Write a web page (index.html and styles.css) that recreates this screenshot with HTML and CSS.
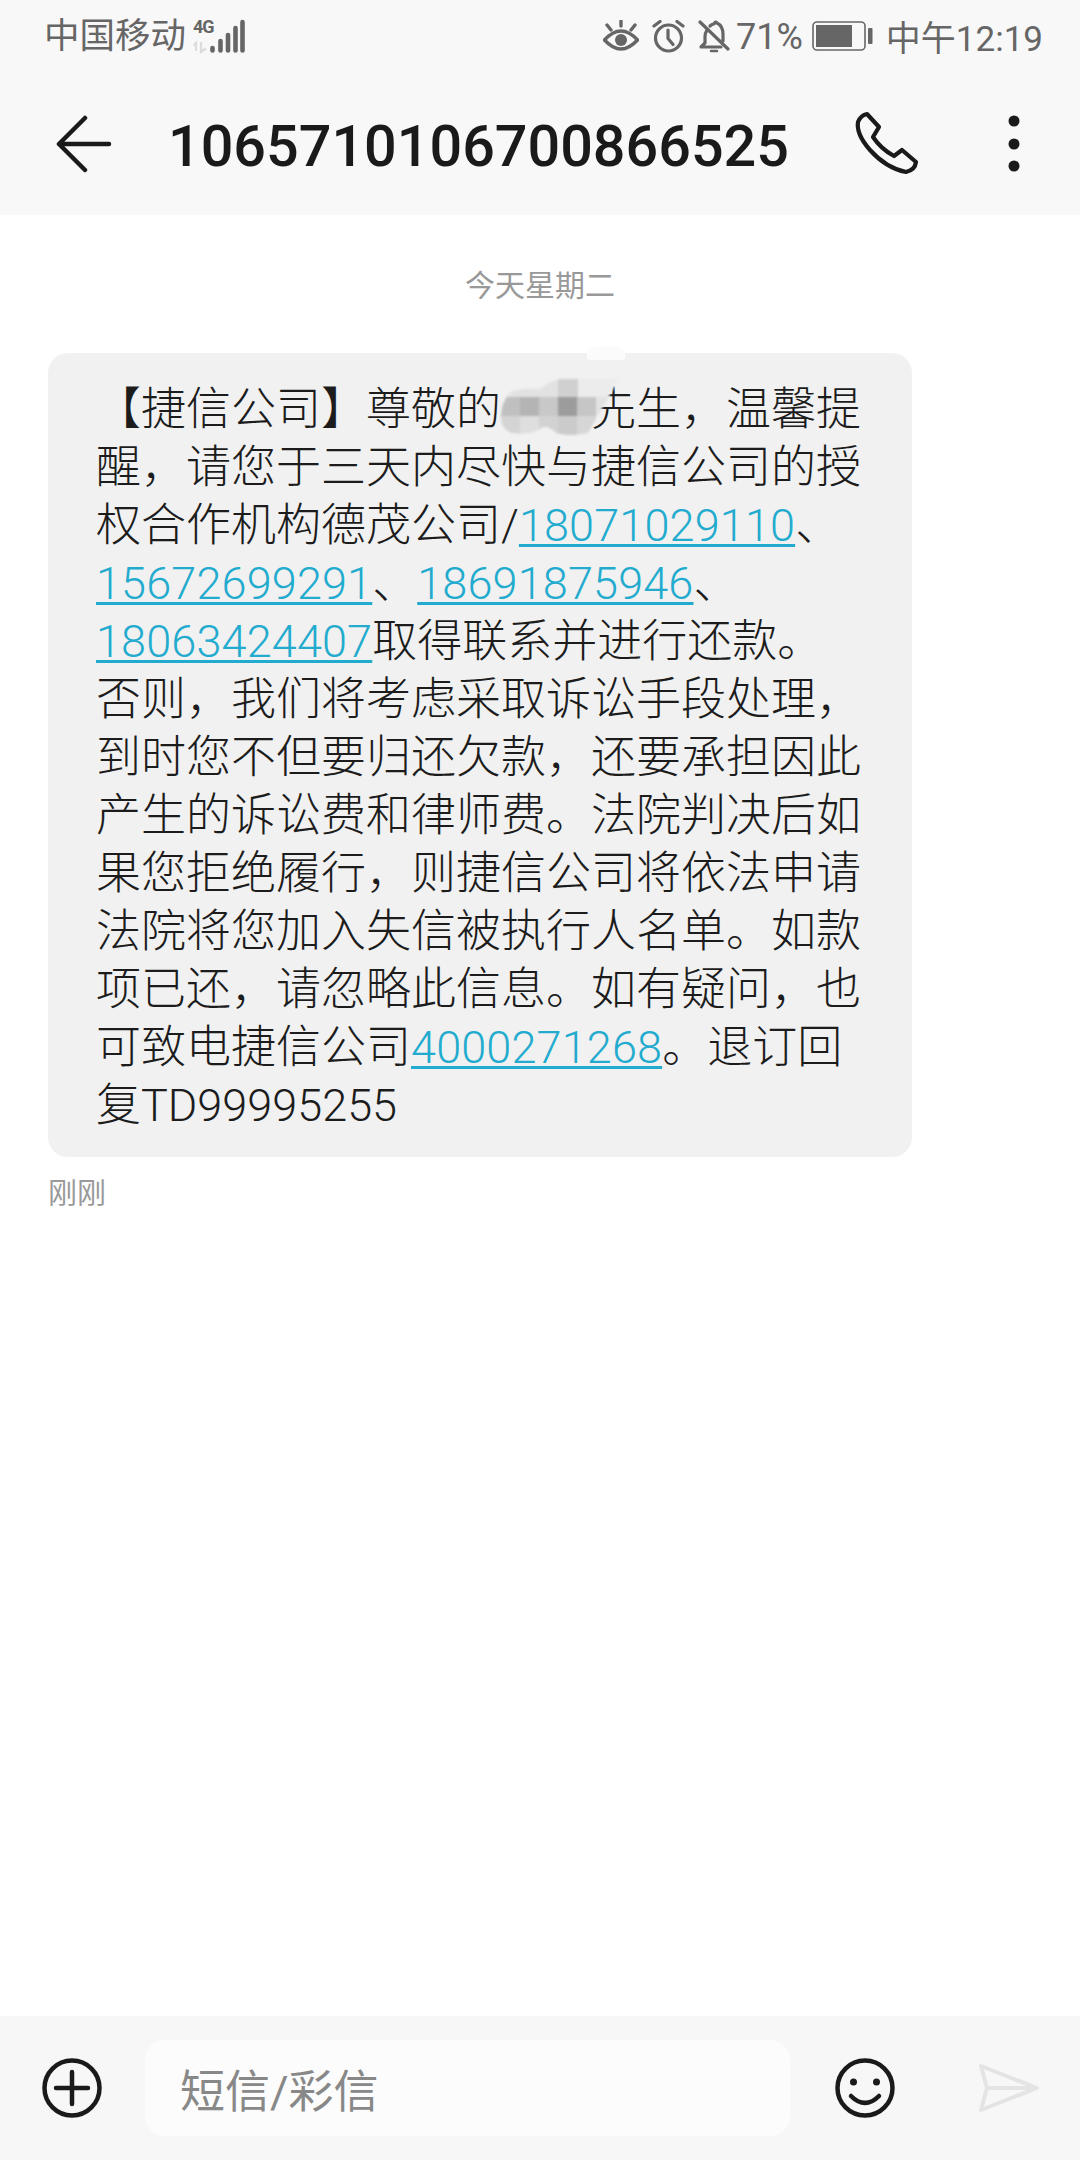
FILE: index.html
```html
<!DOCTYPE html>
<html lang="zh-CN">
<head>
<meta charset="utf-8">
<title>短信</title>
<link rel="stylesheet" href="styles.css">
</head>
<body>
<div class="phone">
  <div class="status">
    <div class="status-left">
      <span class="carrier">中国移动</span>
      <div class="net">
        <span class="net-4g">4G</span>
        <svg class="signal" width="52" height="36" viewBox="0 0 52 36"><g fill="none" stroke="#dcdcdc" stroke-width="2.200"><path d="M3 33v-8l-2.500 2.500"/><path d="M8 24v10l5-3.500"/></g><g fill="none" stroke="#666" stroke-linecap="round" stroke-width="4.600"><path d="M19.500 30v2.500"/><path d="M27.500 23v9.500"/><path d="M35 17v15.500"/><path d="M42.500 10v22.500"/><path d="M49.500 4v28.500"/></g></svg>
      </div>
    </div>
    <div class="status-right">
      <svg class="ic-eye" width="36" height="32" viewBox="0 0 36 32"><g fill="none" stroke="#666" stroke-width="3.400" stroke-linecap="round"><path d="M1.500 19Q18 1 34.500 19Q18 37 1.500 19Z" transform="translate(0 1)"/><path d="M18 1v5M4 5l4 5M32 5l-4 5"/></g><circle cx="18" cy="20" r="6" fill="#666"/></svg>
      <svg class="ic-alarm" width="33" height="33" viewBox="0 0 33 33"><g fill="none" stroke="#666" stroke-width="3.200" stroke-linecap="round"><circle cx="16.500" cy="18" r="13"/><path d="M16 10v8.500l5 6M2 6l6-4.500M31 6l-6-4.500"/></g></svg>
      <svg class="ic-bell" width="32" height="33" viewBox="0 0 32 33"><g fill="none" stroke="#666" stroke-width="3.200" stroke-linecap="round" stroke-linejoin="round"><path d="M2 2l28 27"/><path d="M9 10Q7 13 7 17v6l-4 4h20"/><path d="M12 6Q14 4 16 4Q17 1 19 3Q25 6 25 14v7"/><path d="M13 31h6" stroke-width="2.500"/></g></svg>
      <span class="pct">71%</span>
      <svg class="ic-batt" width="61" height="30" viewBox="0 0 61 30"><rect x="1" y="1" width="52" height="28" rx="4" fill="none" stroke="#666" stroke-width="1.600"/><rect x="4" y="4" width="36" height="22" fill="#666"/><rect x="56" y="7" width="4.500" height="16" rx="1" fill="#666"/></svg>
      <span class="time">中午12:19</span>
    </div>
  </div>

  <header class="topbar">
    <svg class="ic-back" width="56" height="58" viewBox="0 0 56 58"><path d="M29 3L3 29l26 26M3 29h50" fill="none" stroke="#1a1a1a" stroke-width="4.500" stroke-linecap="round" stroke-linejoin="round"/></svg>
    <h1 class="title">1065710106700866525</h1>
    <svg class="ic-phone" width="90" height="90" viewBox="0 0 90 90"><path d="M23 10L35 23L29 33Q37 45 50 52L58 46L72 58Q71 66 62 68Q42 64 26 46Q12 30 14 18Q17 11 23 10Z" fill="none" stroke="#1a1a1a" stroke-width="4.200" stroke-linejoin="round"/></svg>
    <svg class="ic-more" width="12" height="58" viewBox="0 0 12 58"><g fill="#1a1a1a"><circle cx="6" cy="6" r="5.500"/><circle cx="6" cy="29" r="5.500"/><circle cx="6" cy="51" r="5.500"/></g></svg>
  </header>

  <main class="thread">
    <div class="date">今天星期二</div>
    <div class="bubble">
      <span class="smudge"></span>
      <p class="msg">【捷信公司】尊敬的<span class="masked"><svg class="mosaic" width="120" height="56" viewBox="0 0 120 56"><defs><clipPath id="mosaic-clip"><path d="M1 36Q2 22 10 14Q20 8 40 10Q50 2 60 0H119L88 54Q70 58 56 54Q46 44 40 50Q30 56 12 54Q0 50 1 36Z"/></clipPath></defs><g clip-path="url(#mosaic-clip)"><rect width="120" height="18" y="0" fill="#ececec"/><rect x="0" width="60" height="18" fill="#e2e2e2"/><rect x="58" width="20" height="18" fill="#d0d0d0"/><rect y="18" width="20" height="19" fill="#c0c0c0"/><rect x="20" y="18" width="19" height="19" fill="#b4b4b4"/><rect x="39" y="18" width="19" height="19" fill="#c8c8c8"/><rect x="58" y="18" width="19" height="19" fill="#9c9c9c"/><rect x="77" y="18" width="19" height="19" fill="#c6c6c6"/><rect x="96" y="18" width="24" height="19" fill="#e2e2e2"/><rect y="37" width="20" height="19" fill="#d4d4d4"/><rect x="20" y="37" width="19" height="19" fill="#dedede"/><rect x="39" y="37" width="19" height="19" fill="#d2d2d2"/><rect x="58" y="37" width="19" height="19" fill="#cbcbcb"/><rect x="77" y="37" width="19" height="19" fill="#d6d6d6"/><rect x="96" y="37" width="24" height="19" fill="#ececec"/></g></svg></span>先生，温馨提<br>醒，请您于三天内尽快与捷信公司的授<br>权合作机构德茂公司/<a class="num">18071029110</a>、<br><a class="num">15672699291</a>、<a class="num">18691875946</a>、<br><a class="num">18063424407</a>取得联系并进行还款。<br>否则，我们将考虑采取诉讼手段处理，<br>到时您不但要归还欠款，还要承担因此<br>产生的诉讼费和律师费。法院判决后如<br>果您拒绝履行，则捷信公司将依法申请<br>法院将您加入失信被执行人名单。如款<br>项已还，请忽略此信息。如有疑问，也<br>可致电捷信公司<a class="num">4000271268</a>。退订回<br>复TD99995255</p>
    </div>
    <div class="stamp">刚刚</div>
  </main>

  <footer class="composer">
    <svg class="ic-plus" width="60" height="60" viewBox="0 0 60 60"><g fill="none" stroke="#1a1a1a" stroke-linecap="round"><circle cx="30" cy="30" r="27.500" stroke-width="4.500"/><path d="M30 14v32M14 30h32" stroke-width="4.500"/></g></svg>
    <div class="input">短信/彩信</div>
    <svg class="ic-smile" width="60" height="60" viewBox="0 0 60 60"><circle cx="30" cy="30" r="27.500" fill="none" stroke="#1a1a1a" stroke-width="4.500"/><circle cx="18.500" cy="24" r="3.500" fill="#1a1a1a"/><circle cx="41.500" cy="24" r="3.500" fill="#1a1a1a"/><path d="M16 38Q30 52 44 38" fill="none" stroke="#1a1a1a" stroke-width="4.500" stroke-linecap="round"/></svg>
    <svg class="ic-send" width="60" height="48" viewBox="0 0 60 48"><path d="M2 2L58 24L2 46L8 24ZM8 24H58" fill="none" stroke="#e4e4e4" stroke-width="4" stroke-linejoin="round"/></svg>
  </footer>
</div>
</body>
</html>
```

FILE: styles.css
```css
* { box-sizing: border-box; }
html, body { margin: 0; padding: 0; }
body {
  background: #fff;
  font-family: Roboto, "Noto Sans CJK SC", sans-serif;
}
.phone {
  width: 1080px;
  height: 2160px;
  display: flex;
  flex-direction: column;
  overflow: hidden;
}

/* status bar */
.status {
  height: 72px;
  flex: none;
  background: #f8f8f8;
  color: #666;
  display: flex;
  justify-content: space-between;
  align-items: center;
  padding: 0 37px 0 44px;
  font-size: 35px;
}
.status-left, .status-right { display: flex; align-items: center; }
.carrier { font-size: 35.500px; line-height: 40px; width: 142px; white-space: nowrap; }
.net { position: relative; display: flex; align-items: flex-end; margin-left: 7px; height: 36px; }
.net-4g {
  position: absolute;
  left: 0;
  top: 0;
  font-size: 18px;
  font-weight: 700;
  line-height: 18px;
  letter-spacing: -1px;
}
.signal { display: block; }
.status-right svg { flex: none; }
.ic-alarm { margin-left: 13px; }
.ic-bell { margin-left: 13px; }
.pct { margin-left: 6px; margin-top: 2px; font-size: 36px; }
.ic-batt { margin-left: 9px; }
.time { margin-left: 13px; margin-bottom: 2px; font-size: 35px; white-space: nowrap; }

/* top bar */
.topbar {
  height: 143px;
  flex: none;
  background: #f8f8f8;
  display: flex;
  align-items: center;
  padding: 0 60px 0 56px;
}
.title {
  margin: 6px 0 0 56px;
  flex: 1;
  font-size: 57.500px;
  font-weight: 500;
  color: #1a1a1a;
  line-height: 66px;
  white-space: nowrap;
}
.ic-phone { flex: none; margin: 10px 74px 0 0; }
.ic-more { flex: none; }

/* thread */
.thread {
  flex: 1;
  min-height: 0;
  display: flex;
  flex-direction: column;
  padding: 0 48px;
  background: #fff;
}
.date {
  margin-top: 51px;
  height: 40px;
  line-height: 40px;
  text-align: center;
  font-size: 30px;
  color: #999;
}
.bubble {
  position: relative;
  width: 864px;
  margin-top: 47px;
  padding: 27px 0 22px 48px;
  background: #f1f1f1;
  border-radius: 20px;
}
.smudge {
  position: absolute;
  left: 539px;
  top: -7px;
  width: 38px;
  height: 14px;
  background: #fbfbfb;
  border-radius: 50% 50% 10% 10%;
}
.msg {
  margin: 0;
  font-size: 45px;
  font-weight: 300;
  line-height: 58px;
  color: #1c1c1c;
  white-space: nowrap;
}
.masked {
  position: relative;
  display: inline-block;
  width: 90px;
  height: 45px;
}
.mosaic {
  position: absolute;
  left: -1px;
  top: -1px;
  filter: blur(0.8px);
}
.num {
  color: #22abce;
  letter-spacing: 0.150px;
  text-decoration: underline;
  text-decoration-thickness: 3px;
  text-underline-offset: 3px;
}
.stamp {
  margin-top: 19px;
  font-size: 29px;
  line-height: 36px;
  color: #9a9a9a;
}

/* composer */
.composer {
  height: 144px;
  flex: none;
  background: #f7f7f7;
  display: flex;
  align-items: center;
  padding: 0 0 0 42px;
}
.composer svg { flex: none; }
.input {
  width: 645px;
  height: 96px;
  margin-left: 43px;
  padding-left: 35px;
  background: #fcfcfc;
  border-radius: 20px;
  display: flex;
  align-items: center;
  font-size: 45px;
  color: #888;
}
.ic-smile { margin-left: 45px; }
.ic-send { margin-left: 84px; }
```
